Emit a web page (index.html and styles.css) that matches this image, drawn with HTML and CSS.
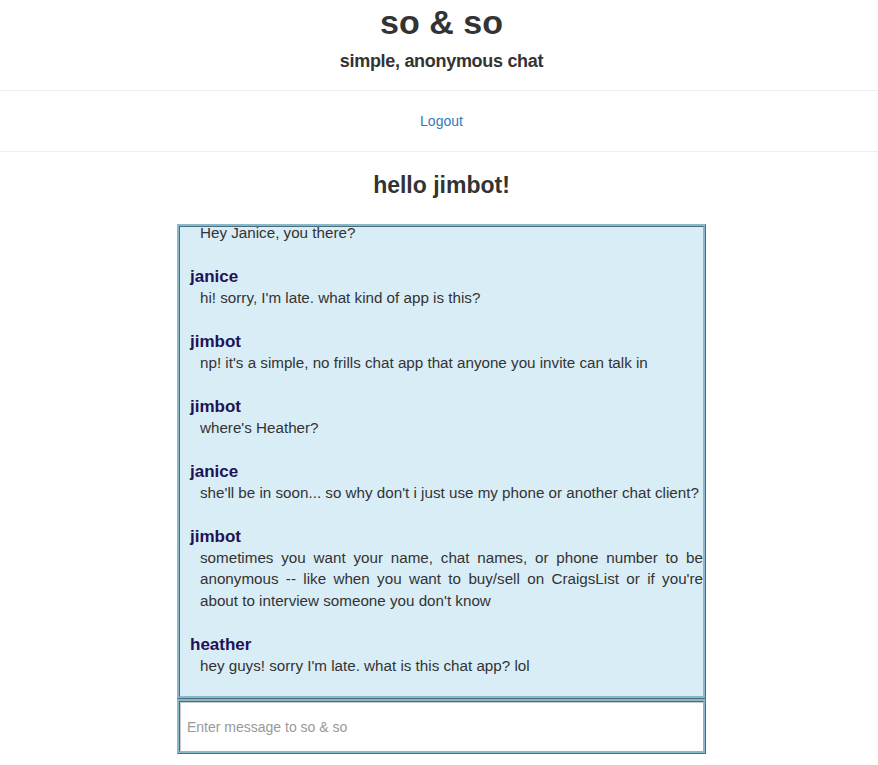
FILE: index.html
```html
<!DOCTYPE html>
<html>
<head>
<meta charset="utf-8">
<title>so &amp; so</title>
<link rel="stylesheet" href="styles.css">
</head>
<body>
<header class="site-header">
  <h1 class="brand">so &amp; so</h1>
  <h4 class="tagline">simple, anonymous chat</h4>
</header>
<nav class="site-nav">
  <a class="nav-link" href="#">Logout</a>
</nav>
<main class="main">
  <h2 class="greeting">hello jimbot!</h2>
  <div class="chat">
    <div class="chat-log">
      <div class="msg">
        <div class="msg-text">Hey Janice, you there?</div>
      </div>
      <div class="msg">
        <div class="msg-name">janice</div>
        <div class="msg-text">hi! sorry, I'm late. what kind of app is this?</div>
      </div>
      <div class="msg">
        <div class="msg-name">jimbot</div>
        <div class="msg-text">np! it's a simple, no frills chat app that anyone you invite can talk in</div>
      </div>
      <div class="msg">
        <div class="msg-name">jimbot</div>
        <div class="msg-text">where's Heather?</div>
      </div>
      <div class="msg">
        <div class="msg-name">janice</div>
        <div class="msg-text">she'll be in soon... so why don't i just use my phone or another chat client?</div>
      </div>
      <div class="msg">
        <div class="msg-name">jimbot</div>
        <div class="msg-text">sometimes you want your name, chat names, or phone number to be anonymous -- like when you want to buy/sell on CraigsList or if you're about to interview someone you don't know</div>
      </div>
      <div class="msg">
        <div class="msg-name">heather</div>
        <div class="msg-text">hey guys! sorry I'm late. what is this chat app? lol</div>
      </div>
    </div>
    <input class="chat-input" type="text" placeholder="Enter message to so &amp; so">
  </div>
</main>
</body>
</html>
```
FILE: styles.css
```css
html, body {
  margin: 0;
  padding: 0;
  background: #fff;
}
body {
  font-family: "Liberation Sans", Arial, Helvetica, sans-serif;
  font-size: 14px;
  line-height: 20px;
  color: #333;
}
.site-header {
  padding-left: 5px;
  padding-top: 2px;
  padding-bottom: 18px;
  border-bottom: 1px solid #eee;
  text-align: center;
}
.brand {
  margin: 0;
  font-size: 34px;
  line-height: 40px;
  font-weight: bold;
  color: #333;
}
.tagline {
  margin: 8px 0 0;
  font-size: 18px;
  line-height: 22px;
  font-weight: bold;
  letter-spacing: -0.3px;
  color: #333;
}
.site-nav {
  padding: 20px 0 20px 5px;
  border-bottom: 1px solid #eee;
  text-align: center;
}
.nav-link {
  color: #337ab7;
  text-decoration: none;
  font-size: 14px;
}
.main {
  padding-left: 5px;
  display: flex;
  flex-direction: column;
  align-items: center;
}
.greeting {
  margin: 19px 0 25px;
  font-size: 23px;
  line-height: 28px;
  font-weight: bold;
  color: #333;
}
.chat {
  width: 529px;
  display: flex;
  flex-direction: column;
}
.chat-log {
  box-sizing: border-box;
  height: 475px;
  overflow: hidden;
  display: flex;
  flex-direction: column;
  justify-content: flex-end;
  background: #d9edf7;
  border: 3px ridge #86b9cc;
  padding: 0 0 20px 10px;
}
.msg {
  flex-shrink: 0;
}
.msg + .msg {
  margin-top: 22.5px;
}
.msg-name {
  font-size: 17px;
  line-height: 21px;
  font-weight: bold;
  color: #1d1256;
}
.msg-text {
  padding-left: 10px;
  font-size: 15.2px;
  line-height: 21.5px;
  text-align: justify;
  color: #333;
}
.chat-input {
  box-sizing: border-box;
  width: 529px;
  height: 55px;
  margin: 0;
  border: 3px ridge #86b9cc;
  padding: 0 7px;
  font-family: "Liberation Sans", Arial, Helvetica, sans-serif;
  font-size: 14px;
  color: #333;
  background: #fff;
  box-shadow: inset 1px 1px 0 #c8c8c8;
  outline: none;
}
.chat-input::placeholder {
  color: #999;
}
```
